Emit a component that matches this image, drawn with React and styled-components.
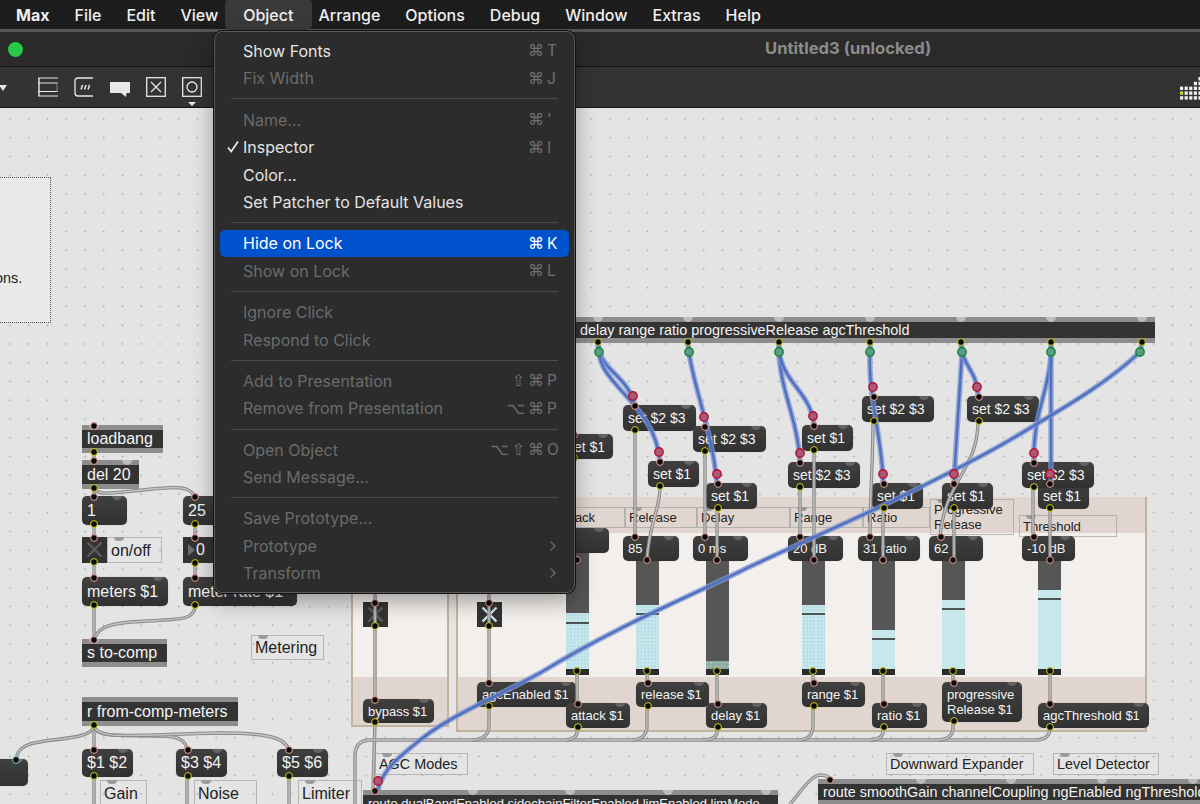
import React from "react";
import styled, { createGlobalStyle } from "styled-components";
import { ChevronRight } from "lucide-react";

const CANVAS_TOP = 108;

const Global = createGlobalStyle`
	html, body {
		margin: 0;
		padding: 0;
		height: 804px;
		overflow: hidden;
		background: #e4e4e4;
		font-family: Inter, "DejaVu Sans", sans-serif;
	}
`;

const Page = styled.div`
	position: relative;
	display: flex;
	flex-direction: column;
	width: 1200px;
	height: 804px;
	overflow: hidden;
`;

/* ---- top chrome ---- */
const MenuBar = styled.div`
	display: flex;
	align-items: center;
	height: 29px;
	padding-left: 3.5px;
	background: #1d1d1d;
	border-bottom: 3px solid #565656;
	font-size: 16px;
	font-weight: 500;
	color: #f0f0f0;
`;
const BarItem = styled.div`
	position: relative;
	padding: 0 12.5px;
	font-weight: ${p => (p.$app ? 700 : 500)};
	white-space: nowrap;
	&::before {
		content: ${p => (p.$open ? '""' : "none")};
		position: absolute;
		inset: -6px -6px -5px;
		background: #3a3a3a;
		border-radius: 5px;
	}
	& > span { position: relative; }
`;
const TitleBar = styled.div`
	display: flex;
	align-items: center;
	height: 34px;
	padding-left: 8px;
	background: #2a2a2a;
	border-bottom: 1px solid #111;
`;
const GreenDot = styled.div`
	width: 15px;
	height: 15px;
	border-radius: 50%;
	background: #2cc84a;
`;
const Title = styled.div`
	margin: -2px 0 0 742px;
	font-size: 16.6px;
	font-weight: 700;
	color: #8b8b8b;
	white-space: nowrap;
`;
const Toolbar = styled.div`
	display: flex;
	align-items: flex-start;
	gap: 16px;
	height: 41px;
	padding-top: 10px;
	box-sizing: border-box;
	background: #333333;
	border-bottom: 1px solid #161616;
	color: #e8e8e8;
`;
const ToolTriangle = styled.div`
	width: 0;
	height: 0;
	margin: 8px 15px 0 -1px;
	border-left: 4px solid transparent;
	border-right: 4px solid transparent;
	border-top: 6px solid #e8e8e8;
`;
const ToolIcon = styled.div`
	display: flex;
	flex-direction: column;
	align-items: center;
	width: 20px;
	height: 20px;
`;
const Pointer = styled.div`
	flex: none;
	width: 0;
	height: 0;
	margin-top: 5px;
	border-left: 4px solid transparent;
	border-right: 4px solid transparent;
	border-top: 4px solid #e8e8e8;
`;
const GridIcon = styled.svg`
	margin: -1px 0 0 auto;
`;

/* ---- patcher canvas ---- */
const Canvas = styled.div`
	position: relative;
	flex: 1;
	overflow: hidden;
	background-color: #e4e4e4;
	background-image: radial-gradient(circle, #a9a9a9 0.8px, transparent 1.1px);
	background-size: 18.75px 18.75px;
	background-position: 0.6px 1.6px;
`;
const At = styled.div`
	position: absolute;
	box-sizing: border-box;
	left: ${p => p.$x}px;
	top: ${p => p.$y - CANVAS_TOP}px;
	width: ${p => p.$w}px;
	height: ${p => p.$h}px;
`;
const Panel = styled(At)`
	display: flex;
	flex-direction: column;
	justify-content: space-between;
	background: #f2efec;
	border: 2px solid #c2b39c;
	border-top: none;
`;
const PanelBand = styled.div`
	background: #e0d6cf;
	height: ${p => p.$h}px;
`;
const NotePanel = styled(At)`
	border: 1px dotted #555;
	background: #e9e9e9;
	font: 14.4px "Liberation Sans", Arial, sans-serif;
	color: #222;
	padding-top: 92px;
	text-indent: -5px;
	overflow: hidden;
`;
const MessageBox = styled(At)`
	display: flex;
	align-items: center;
	padding: 0 5px;
	background: linear-gradient(#404040, #313131);
	border-radius: 5px;
	font: ${p => p.$size}px/${p => Math.round(p.$size * 1.15)}px "Liberation Sans", Arial, sans-serif;
	color: #f4f4f4;
	white-space: pre;
	overflow: hidden;
	box-shadow: 0 0 1px rgba(0, 0, 0, 0.3);
`;
const MessageHump = styled.div`
	position: absolute;
	top: -4px;
	right: 5px;
	width: 10px;
	height: 8px;
	border-radius: 50%;
	background: #646464;
`;
const ObjectBox = styled(At)`
	display: flex;
	align-items: center;
	padding: 0 5px;
	padding-left: ${p => p.$pad || 5}px;
	background: #333;
	border-top: 5px solid #8d8d8d;
	border-bottom: 5px solid #8d8d8d;
	font: ${p => p.$size}px "Liberation Sans", Arial, sans-serif;
	color: #f4f4f4;
	white-space: nowrap;
`;
const ObjectHump = styled.div`
	position: absolute;
	top: -5px;
	left: ${p => p.$x}px;
	width: 10px;
	height: 5px;
	border-radius: 0 0 5px 5px;
	background: #bdbdbd;
`;
const Comment = styled(At)`
	display: flex;
	align-items: center;
	padding: 0 3px;
	border: 1.5px solid rgba(165, 165, 165, 0.75);
	font: ${p => p.$size}px/${p => Math.round(p.$size * 1.18)}px "Liberation Sans", Arial, sans-serif;
	color: #222;
	white-space: pre;
`;
const CommentHump = styled.div`
	position: absolute;
	top: -1px;
	left: 6px;
	width: 10px;
	height: 4px;
	border-radius: 0 0 5px 5px;
	background: #9a9a9a;
`;
const ToggleBox = styled(At)`
	background: #333;
`;
const NumberBox = styled(At)`
	display: flex;
	align-items: center;
	gap: 1px;
	background: #333;
	font: 16px "Liberation Sans", Arial, sans-serif;
	color: #f4f4f4;
`;
const NumberArrow = styled.div`
	width: 0;
	height: 0;
	margin-left: 5px;
	border-top: 6.5px solid transparent;
	border-bottom: 6.5px solid transparent;
	border-left: 7px solid #6e6e6e;
`;
const SliderTrack = styled(At)`
	background: #565656;
`;
const SliderFill = styled.div`
	position: absolute;
	left: 0;
	right: 0;
	top: ${p => p.$top}px;
	bottom: 6px;
	background-color: ${p => p.$color || "#c6e7eb"};
	background-image: ${p => (p.$dotted ? "radial-gradient(circle, #a4d0e2 0.5px, transparent 0.9px)" : "none")};
	background-size: 3.5px 3.5px;
`;
const SliderKnob = styled.div`
	position: absolute;
	left: 0;
	right: 0;
	top: ${p => p.$top}px;
	height: 2px;
	background: #4d5455;
`;
const SliderBase = styled.div`
	position: absolute;
	left: 0;
	right: 0;
	bottom: 0;
	height: 6px;
	background: #2b2b2b;
`;
const CordLayer = styled.svg`
	position: absolute;
	left: 0;
	top: 0;
	pointer-events: none;
`;

/* ---- open menu ---- */
const Menu = styled.div`
	position: absolute;
	left: 214px;
	top: 31px;
	box-sizing: border-box;
	width: 361px;
	height: 562px;
	padding: 5px 5px;
	background: #2c2c2c;
	border: 1px solid #5a5a5a;
	border-radius: 8px;
	box-shadow: 0 0 0 1px #111, 0 8px 22px rgba(0, 0, 0, 0.35);
	font-size: 16px;
	font-weight: 400;
`;
const MenuRow = styled.div`
	position: relative;
	display: flex;
	align-items: center;
	justify-content: space-between;
	height: 27.5px;
	padding: 0 11px 0 23px;
	border-radius: 5px;
	color: ${p => (p.$dim ? "#6b6b6b" : p.$active ? "#fff" : "#e4e4e4")};
	background: ${p => (p.$active ? "#0052cc" : "transparent")};
`;
const MenuSep = styled.div`
	height: 1px;
	margin: 6.4px 11px;
	background: #4b4b4b;
`;
const CheckMark = styled.svg`
	position: absolute;
	left: 7px;
	top: 7px;
`;
const Keys = styled.div`
	display: flex;
	align-items: center;
	color: ${p => (p.$active ? "#fff" : "#6f6f6f")};
	font-family: "DejaVu Sans", Inter, sans-serif;
	font-size: 16px;
`;
const KeyMods = styled.span`
	letter-spacing: 3px;
`;
const KeyLetter = styled.span`
	width: 11px;
	font-family: Inter, sans-serif;
	font-size: 15.5px;
`;

const barItems = ["File", "Edit", "View", "Object", "Arrange", "Options", "Debug", "Window", "Extras", "Help"];

const menuItems = [
	{ label: "Show Fonts", mods: "⌘", key: "T" },
	{ label: "Fix Width", mods: "⌘", key: "J", dim: true },
	"sep",
	{ label: "Name...", mods: "⌘", key: "'", dim: true },
	{ label: "Inspector", mods: "⌘", key: "I", checked: true },
	{ label: "Color..." },
	{ label: "Set Patcher to Default Values" },
	"sep",
	{ label: "Hide on Lock", mods: "⌘", key: "K", active: true },
	{ label: "Show on Lock", mods: "⌘", key: "L", dim: true },
	"sep",
	{ label: "Ignore Click", dim: true },
	{ label: "Respond to Click", dim: true },
	"sep",
	{ label: "Add to Presentation", mods: "⇧⌘", key: "P", dim: true },
	{ label: "Remove from Presentation", mods: "⌥⌘", key: "P", dim: true },
	"sep",
	{ label: "Open Object", mods: "⌥⇧⌘", key: "O", dim: true },
	{ label: "Send Message...", dim: true },
	"sep",
	{ label: "Save Prototype...", dim: true },
	{ label: "Prototype", dim: true, sub: true },
	{ label: "Transform", dim: true, sub: true },
];

// [text, x, y, w, h, font size]
const messages = [
	["set $1", 562, 434, 51, 25, 14],
	["set $2 $3", 623, 405, 73, 26, 14],
	["set $1", 648, 461, 51, 26, 14],
	["set $2 $3", 693, 426, 73, 26, 14],
	["set $1", 706, 483, 51, 26, 14],
	["set $1", 802, 425, 51, 26, 14],
	["set $2 $3", 788, 462, 72, 26, 14],
	["set $2 $3", 862, 396, 72, 26, 14],
	["set $1", 872, 483, 51, 26, 14],
	["set $2 $3", 967, 396, 72, 26, 14],
	["set $1", 942, 483, 51, 26, 14],
	["set $1", 1038, 483, 51, 26, 14],
	["set $2 $3", 1022, 462, 72, 26, 14],
	["", 553, 528, 56, 25, 13],
	["85", 623, 536, 56, 25, 13],
	["0 ms", 693, 536, 55, 25, 13],
	["20 dB", 788, 536, 55, 25, 13],
	["31 ratio", 858, 536, 62, 25, 13],
	["62", 929, 536, 54, 25, 13],
	["-10 dB", 1022, 536, 53, 25, 13],
	["bypass $1", 363, 699, 71, 24, 13],
	["agcEnabled $1", 477, 682, 99, 25, 13],
	["attack $1", 566, 703, 64, 25, 13],
	["release $1", 636, 682, 73, 25, 13],
	["delay $1", 706, 703, 61, 25, 13],
	["range $1", 802, 682, 63, 25, 13],
	["ratio $1", 872, 703, 55, 25, 13],
	["progressive\nRelease $1", 942, 682, 80, 40, 13],
	["agcThreshold $1", 1038, 703, 111, 25, 13],
	["1", 82, 496, 45, 29, 16],
	["25", 183, 496, 60, 29, 16],
	["meters $1", 82, 577, 86, 29, 16],
	["meter rate $1", 183, 577, 114, 29, 16],
	["$1 $2", 82, 749, 51, 28, 16],
	["$3 $4", 176, 749, 51, 28, 16],
	["$5 $6", 277, 749, 51, 28, 16],
	["", -20, 759, 48, 27, 16],
];

// [text, x, y, w, h, font size, hump offsets, left padding]
const objects = [
	["delay range ratio progressiveRelease agcThreshold", 540, 317, 615, 26, 14.4, [53, 143, 234, 325, 416, 506, 597], 40],
	["loadbang", 82, 425, 81, 28, 16, [7]],
	["del 20", 82, 460, 57, 29, 16, [40]],
	["s to-comp", 82, 639, 85, 28, 16, [7]],
	["r from-comp-meters", 82, 697, 156, 29, 16, []],
	["route dualBandEnabled sidechainFilterEnabled limEnabled limMode", 363, 790, 415, 26, 13, [105, 202, 300, 398]],
	["route smoothGain channelCoupling ngEnabled ngThreshold", 818, 779, 420, 26, 14.4, [98, 188, 279, 370]],
];

// [text, x, y, w, h, font size]
const comments = [
	["Attack", 555, 507, 70, 21, 13],
	["Release", 625, 507, 72, 21, 13],
	["Delay", 697, 507, 93, 21, 13],
	["Range", 790, 507, 73, 21, 13],
	["Ratio", 863, 507, 67, 21, 13],
	["Progressive\nRelease", 930, 499, 84, 36, 13],
	["Threshold", 1019, 515, 98, 22, 13],
	["on/off", 107, 537, 55, 26, 16],
	["Metering", 251, 635, 73, 25, 16],
	["AGC Modes", 375, 753, 93, 22, 14.4],
	["Downward Expander", 886, 753, 148, 22, 14.4],
	["Level Detector", 1053, 753, 106, 22, 14.4],
	["Gain", 100, 780, 47, 27, 16],
	["Noise", 194, 780, 63, 27, 16],
	["Limiter", 298, 780, 64, 27, 16],
];

// x, fill start, knob y, optional look
const sliders = [
	{ x: 566, fill: 613, knob: 622, dotted: true },
	{ x: 636, fill: 605, knob: 613, dotted: true },
	{ x: 706, fill: 661, knob: null, dotted: true, color: "#8fa8a0" },
	{ x: 802, fill: 605, knob: 613, dotted: true },
	{ x: 872, fill: 630, knob: 638 },
	{ x: 942, fill: 600, knob: 608 },
	{ x: 1038, fill: 590, knob: 598 },
];

const greyCords = [
	"M94 452V461", "M94 488V497", "M94 525V538", "M94 562V578",
	"M94 605V640", "M195 525V538", "M195 563V578",
	"M94 488C98 498 120 491 165 488C185 486 192 490 195 497",
	"M195 606C195 622 175 619 130 622C105 624 97 630 94 640",
	"M94 726V750",
	"M94 726C96 738 120 735 160 736C178 736 186 740 187 750",
	"M94 726C98 740 130 735 220 733C270 733 285 738 289 750",
	"M94 726C92 740 50 738 30 744C20 748 17 752 16 760",
	"M94 777V804", "M187 777V804", "M289 777V804",
	"M635 431V536", "M660 487C660 510 650 520 647 558",
	"M705 452V536", "M717 509V558",
	"M800 487V536", "M814 448V558",
	"M873 420C873 460 870 500 870 536", "M883 509V558",
	"M978 421C978 470 945 480 940 537", "M954 508V558",
	"M1033 487V536", "M1050 508V558",
	"M375 590V700", "M489 590V683",
	"M577 672V705", "M647 672V683", "M717 672V705", "M813 672V683",
	"M883 672V704", "M953 672V683", "M1050 672V704",
	"M375 723L373 790",
	"M355 804V756Q355 740 371 740H1036Q1050 740 1050 727",
	"M489 707V726Q489 739 472 740",
	"M577 728V732Q577 739 565 740",
	"M647 707V726Q647 739 632 740",
	"M717 728V732Q717 739 705 740",
	"M813 707V726Q813 739 799 740",
	"M883 728V732Q883 739 870 740",
	"M953 722V728Q953 739 938 740",
	"M790 804C800 793 810 776 820 775C825 775 829 776 830 780",
];

const blueCords = [
	"M598 342L599 352C606 372 628 378 635 405",
	"M598 342L599 352C600 385 655 405 660 461",
	"M688 342L689 352C693 385 712 430 717 483",
	"M779 342V352C780 390 798 420 800 462",
	"M779 342V352C785 385 811 393 814 425",
	"M870 342V352C868 400 883 440 883 483",
	"M961 342L962 352C960 390 956 440 954 483",
	"M961 342L962 352C966 368 978 375 978 396",
	"M1051 342V352C1050 390 1032 415 1034 462",
	"M1051 342V483",
	"M1142 342L1140 352C1105 385 1060 410 1015 437C985 455 950 473 880 507C830 530 790 548 747 568C700 592 620 624 540 673C490 700 450 716 420 740C400 756 382 770 378 790",
];

const greenDots = [[599, 352], [689, 352], [779, 352], [870, 352], [962, 352], [1051, 352], [1140, 352]];
const redDots = [
	[633, 396], [659, 452], [704, 417], [717, 474], [800, 453], [813, 416],
	[873, 387], [883, 474], [977, 387], [954, 474], [1034, 453], [1050, 474], [378, 781],
];

const inlets = [
	...messages.filter(m => m[0] !== "").map(m => [m[1] + 12, m[2]]),
	[94, 425], [94, 460], [94, 639], [830, 779], [375, 790],
	[375, 602], [489, 602], [94, 537], [195, 537],
	[647, 559], [717, 559], [814, 559], [883, 559], [953, 559], [1050, 559], [577, 559],
];
const outlets = [
	...messages.filter(m => m[0] !== "" && !/^(85|0 ms|20 dB|31 ratio|62|-10 dB)$/.test(m[0])).map(m => [m[1] + 12, m[2] + m[4]]),
	[94, 453], [94, 489], [94, 726],
	[598, 343], [688, 343], [779, 343], [870, 343], [961, 343], [1051, 343], [1142, 343],
	[375, 627], [489, 627], [94, 563], [195, 564],
	[577, 672], [647, 672], [717, 672], [813, 672], [883, 672], [953, 672], [1050, 672],
];

const ToggleIcon = ({ color }) => (
	<svg width="25" height="25" viewBox="0 0 25 25">
		<path d="M5.5 5.5L19.5 19.5M19.5 5.5L5.5 19.5" stroke={color} strokeWidth="2.4" fill="none" />
	</svg>
);

const Cords = () => (
	<CordLayer width="1200" height="696" viewBox={`0 ${CANVAS_TOP} 1200 696`}>
		{greyCords.map((d, i) => (
			<g key={i} fill="none">
				<path d={d} stroke="#8a8a8a" strokeWidth="3.4" />
				<path d={d} stroke="#c4c4c4" strokeWidth="1.3" />
			</g>
		))}
		{blueCords.map((d, i) => (
			<g key={i} fill="none">
				<path d={d} stroke="#7d95d2" strokeOpacity="0.75" strokeWidth="5.5" />
				<path d={d} stroke="#4f6fbf" strokeWidth="2.4" />
			</g>
		))}
		{inlets.map(([x, y], i) => (
			<circle key={i} cx={x} cy={y + 1} r="3.4" fill="#0a0a0a" stroke="#f0a595" strokeWidth="1" />
		))}
		{outlets.map(([x, y], i) => (
			<circle key={i} cx={x} cy={y - 1} r="3.4" fill="#0a0a0a" stroke="#d6d61e" strokeWidth="1" />
		))}
		<circle cx="16" cy="760" r="3.4" fill="#0a0a0a" stroke="#7cc4e8" strokeWidth="1" />
		{greenDots.map(([x, y], i) => (
			<circle key={i} cx={x} cy={y} r="4.2" fill="#5b9a8c" stroke="#12872f" strokeWidth="1.4" />
		))}
		{redDots.map(([x, y], i) => (
			<circle key={i} cx={x} cy={y} r="4.2" fill="#a85a78" stroke="#b5122f" strokeWidth="1.4" />
		))}
	</CordLayer>
);

const MenuBlock = () => (
	<Menu>
		{menuItems.map((item, i) =>
			item === "sep" ? (
				<MenuSep key={i} />
			) : (
				<MenuRow key={i} $dim={item.dim} $active={item.active}>
					{item.checked && (
						<CheckMark width="12" height="13" viewBox="0 0 12 13">
							<path d="M1 7.5L4.2 11.5L11 1.5" stroke="#e4e4e4" strokeWidth="1.8" fill="none" />
						</CheckMark>
					)}
					<span>{item.label}</span>
					{item.key && (
						<Keys $active={item.active}>
							<KeyMods>{item.mods}</KeyMods>
							<KeyLetter>{item.key}</KeyLetter>
						</Keys>
					)}
					{item.sub && <ChevronRight size={16} strokeWidth={2} color="#6b6b6b" style={{ marginRight: -3 }} />}
				</MenuRow>
			)
		)}
	</Menu>
);

const App = () => (
	<Page>
		<Global />
		<MenuBar>
			<BarItem $app><span>Max</span></BarItem>
			{barItems.map(name => (
				<BarItem key={name} $open={name === "Object"}><span>{name}</span></BarItem>
			))}
		</MenuBar>
		<TitleBar>
			<GreenDot />
			<Title>Untitled3 (unlocked)</Title>
		</TitleBar>
		<Toolbar>
			<ToolTriangle />
			<ToolIcon>
				<svg width="20" height="20" viewBox="0 0 20 20" fill="none" stroke="#e8e8e8">
					<path d="M0 1H20M0 6H20M0 14.5H20M0 19H20" strokeWidth="1.2" />
					<path d="M1 1V19" strokeWidth="1.4" />
					<path d="M19 6V14.5" stroke="#777" strokeWidth="1.2" />
				</svg>
			</ToolIcon>
			<ToolIcon>
				<svg width="20" height="20" viewBox="0 0 20 20" fill="none" stroke="#e8e8e8">
					<path d="M19 1H4Q1 1 1 4V16Q1 19 4 19H19" strokeWidth="1.3" />
					<path d="M7 12.5L8.5 8M10.5 12.5L12 8M14 12.5L15.5 8" strokeWidth="1.5" />
				</svg>
			</ToolIcon>
			<ToolIcon>
				<svg width="20" height="20" viewBox="0 0 20 20">
					<path d="M0 5H20V16H16.5L16 20L11 16H0Z" fill="#e8e8e8" />
				</svg>
			</ToolIcon>
			<ToolIcon>
				<svg width="20" height="20" viewBox="0 0 20 20" fill="none" stroke="#e8e8e8" strokeWidth="1.3">
					<rect x="0.7" y="0.7" width="18.6" height="18.6" />
					<path d="M5 5L15 15M15 5L5 15" />
				</svg>
			</ToolIcon>
			<ToolIcon>
				<svg width="20" height="20" viewBox="0 0 20 20" fill="none" stroke="#e8e8e8" strokeWidth="1.3" style={{ flex: "none" }}>
					<rect x="0.7" y="0.7" width="18.6" height="18.6" />
					<circle cx="10" cy="10" r="5" />
				</svg>
				<Pointer />
			</ToolIcon>
			<GridIcon width="20" height="24" viewBox="0 0 20 24">
				{[0, 1, 2, 3, 4].map(c =>
					[0, 1, 2, 3, 4].map(r =>
						(r > 0 || c === 4) && (r > 1 || c >= 3) ? (
							<rect key={`${c}-${r}`} x={c * 4.6} y={r * 4.8 + 1} width="3.2" height="3.4" fill={c === 0 && r === 3 ? "#c8cf3a" : "#f0f0f0"} />
						) : null
					)
				)}
			</GridIcon>
		</Toolbar>
		<Canvas>
			<NotePanel $x={-1} $y={177} $w={52} $h={146}>ons.</NotePanel>
			<Panel $x={351} $y={497} $w={98} $h={230}>
				<PanelBand $h={36} />
				<PanelBand $h={48} />
			</Panel>
			<Panel $x={456} $y={497} $w={691} $h={235}>
				<PanelBand $h={36} />
				<PanelBand $h={53} />
			</Panel>
			{sliders.map(s => (
				<SliderTrack key={s.x} $x={s.x} $y={553} $w={23} $h={122}>
					<SliderFill $top={s.fill - 553} $dotted={s.dotted} $color={s.color} />
					{s.knob && <SliderKnob $top={s.knob - 553} />}
					<SliderBase />
				</SliderTrack>
			))}
			{comments.map(([text, x, y, w, h, size]) => (
				<Comment key={text} $x={x} $y={y} $w={w} $h={h} $size={size}>
					<CommentHump />
					{text}
				</Comment>
			))}
			{objects.map(([text, x, y, w, h, size, humps, pad]) => (
				<ObjectBox key={text} $x={x} $y={y} $w={w} $h={h} $size={size} $pad={pad}>
					{humps.map(hx => <ObjectHump key={hx} $x={hx} />)}
					{text}
				</ObjectBox>
			))}
			{messages.map(([text, x, y, w, h, size], i) => (
				<MessageBox key={i} $x={x} $y={y} $w={w} $h={h} $size={size}>
					<MessageHump />
					{text}
				</MessageBox>
			))}
			<ToggleBox $x={82} $y={537} $w={25} $h={26}><ToggleIcon color="#5c5c5c" /></ToggleBox>
			<ToggleBox $x={363} $y={602} $w={25} $h={25}><ToggleIcon color="#5c5c5c" /></ToggleBox>
			<ToggleBox $x={477} $y={602} $w={25} $h={25}><ToggleIcon color="#cfeaf0" /></ToggleBox>
			<NumberBox $x={183} $y={537} $w={50} $h={26}>
				<NumberArrow />0
			</NumberBox>
			<Cords />
		</Canvas>
		<MenuBlock />
	</Page>
);

export default App;
